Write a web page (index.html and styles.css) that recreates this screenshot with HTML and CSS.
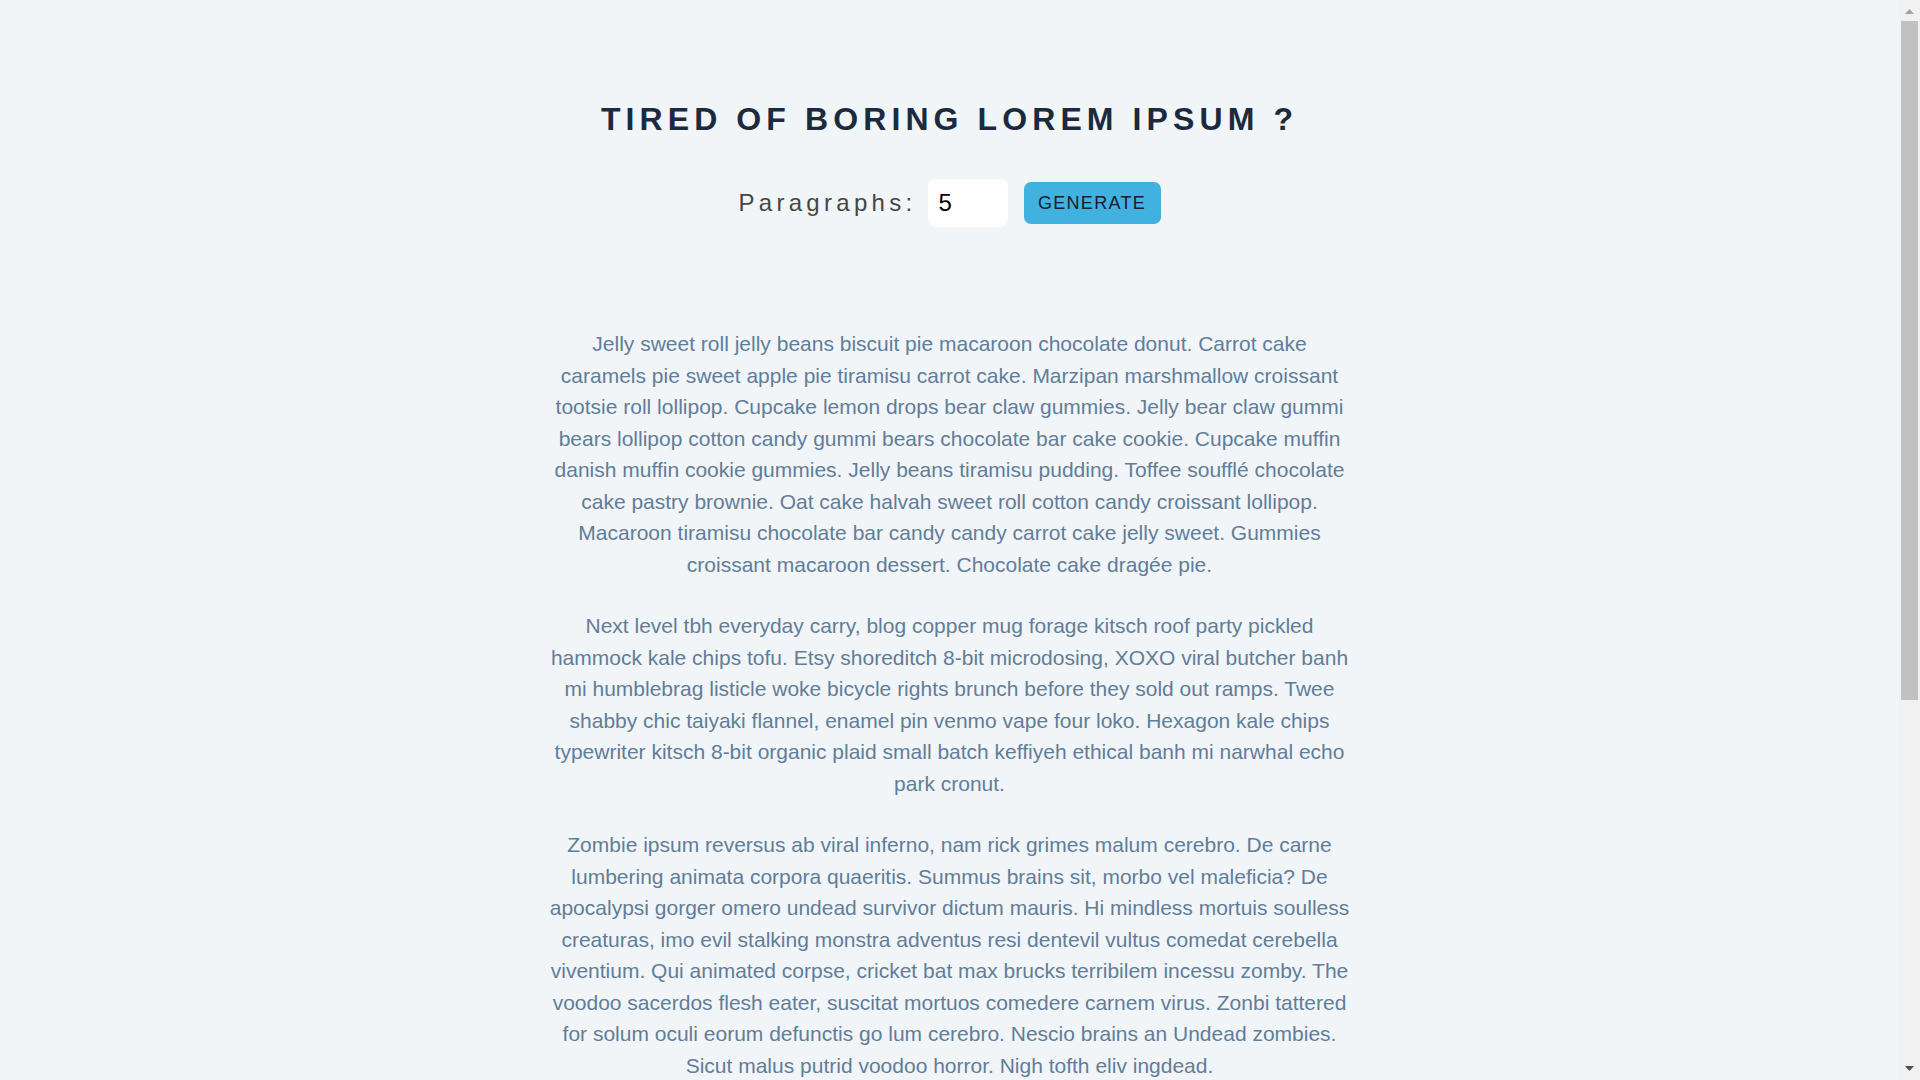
FILE: index.html
```html
<!DOCTYPE html>
<html lang="en">
<head>
<meta charset="utf-8">
<title>Lorem Ipsum Generator</title>
<link rel="stylesheet" href="styles.css">
</head>
<body>
<div class="viewport">
  <main class="page">
    <section class="section-center">
      <h3 class="title">tired of boring lorem ipsum ?</h3>
      <form class="lorem-form">
        <label class="form-label" for="amount">Paragraphs:</label>
        <input class="form-input" type="number" name="amount" id="amount" value="5">
        <button class="btn" type="submit">generate</button>
      </form>
      <article class="lorem-text">
        <p>Jelly sweet roll jelly beans biscuit pie macaroon chocolate donut. Carrot cake caramels pie sweet apple pie tiramisu carrot cake. Marzipan marshmallow croissant tootsie roll lollipop. Cupcake lemon drops bear claw gummies. Jelly bear claw gummi bears lollipop cotton candy gummi bears chocolate bar cake cookie. Cupcake muffin danish muffin cookie gummies. Jelly beans tiramisu pudding. Toffee soufflé chocolate cake pastry brownie. Oat cake halvah sweet roll cotton candy croissant lollipop. Macaroon tiramisu chocolate bar candy candy carrot cake jelly sweet. Gummies croissant macaroon dessert. Chocolate cake dragée pie.</p>
        <p>Next level tbh everyday carry, blog copper mug forage kitsch roof party pickled hammock kale chips tofu. Etsy shoreditch 8-bit microdosing, XOXO viral butcher banh mi humblebrag listicle woke bicycle rights brunch before they sold out ramps. Twee shabby chic taiyaki flannel, enamel pin venmo vape four loko. Hexagon kale chips typewriter kitsch 8-bit organic plaid small batch keffiyeh ethical banh mi narwhal echo park cronut.</p>
        <p>Zombie ipsum reversus ab viral inferno, nam rick grimes malum cerebro. De carne lumbering animata corpora quaeritis. Summus brains sit, morbo vel maleficia? De apocalypsi gorger omero undead survivor dictum mauris. Hi mindless mortuis soulless creaturas, imo evil stalking monstra adventus resi dentevil vultus comedat cerebella viventium. Qui animated corpse, cricket bat max brucks terribilem incessu zomby. The voodoo sacerdos flesh eater, suscitat mortuos comedere carnem virus. Zonbi tattered for solum oculi eorum defunctis go lum cerebro. Nescio brains an Undead zombies. Sicut malus putrid voodoo horror. Nigh tofth eliv ingdead.</p>
        <p>Cat ipsum dolor sit amet, purr when being pet. Furrier and even more furrier hairball. Spit up on light gray carpet instead of adjacent linoleum sit and stare if it fits i sits. Flex claws on the human's belly and purr like a lawnmower. Chill on the couch table. Knock over christmas tree flop over. Check cat door for ambush 10 times before coming in lounge in doorway hide when guests come over, for dead stare with ears cocked.</p>
        <p>Bacon ipsum dolor amet pastrami shank tenderloin, ham hock frankfurter ribeye chuck spare ribs pork belly. Kielbasa short loin bresaola, turducken jowl meatball tri-tip burgdoggen. Pork chop andouille prosciutto, picanha biltong doner strip steak beef ribs. Ground round swine fatback leberkas cupim, salami shoulder brisket pancetta meatloaf boudin. Sirloin venison jerky capicola, alcatra porchetta short ribs tongue hamburger. Filet mignon pig drumstick flank corned beef, chislic kevin rump landjaeger t-bone. Beef ribs buffalo cow turkey ball tip sausage, shankle bacon pork loin strip steak.</p>
      </article>
    </section>
  </main>
  <div class="scrollbar" aria-hidden="true">
    <div class="sb-btn">
      <svg class="sb-arrow" width="9" height="5" viewBox="0 0 9 5"><path d="M4.5 0 L9 5 L0 5 Z" fill="#a3a3a3"/></svg>
    </div>
    <div class="sb-track">
      <div class="sb-thumb"></div>
    </div>
    <div class="sb-btn sb-btn-down">
      <svg class="sb-arrow" width="9" height="5" viewBox="0 0 9 5"><path d="M0 0 L9 0 L4.5 5 Z" fill="#505050"/></svg>
    </div>
  </div>
</div>
</body>
</html>
```
FILE: styles.css
```css
* {
  box-sizing: border-box;
}

html, body {
  margin: 0;
  padding: 0;
}

body {
  background: #f1f5f8;
  font-family: "Liberation Sans", Arial, sans-serif;
  color: #102a42;
}

.viewport {
  display: flex;
  align-items: flex-start;
}

.page {
  flex: 1;
  min-width: 0;
}

/* browser scrollbar look-alike */
.scrollbar {
  position: sticky;
  top: 0;
  flex: 0 0 21px;
  width: 21px;
  height: 100vh;
  background: #f1f1f1;
  display: flex;
  flex-direction: column;
}

.sb-btn {
  height: 21px;
  display: flex;
  justify-content: center;
  padding-top: 9px;
}

.sb-btn-down {
  padding-top: 7px;
}

.sb-arrow {
  display: block;
}

.sb-track {
  flex: 1;
  padding: 0 2px;
}

.sb-thumb {
  height: 679px;
  background: #c1c1c1;
}

.section-center {
  padding: 99px 0 60px;
  display: flex;
  flex-direction: column;
  align-items: center;
}

.title {
  margin: 0;
  font-size: 32px;
  line-height: 40px;
  font-weight: 700;
  letter-spacing: 5.1px;
  text-transform: uppercase;
  color: #1c2a3d;
  text-align: center;
}

.lorem-form {
  margin-top: 40px;
  display: flex;
  align-items: center;
  justify-content: center;
}

.form-label {
  font-size: 24px;
  letter-spacing: 4.3px;
  color: #464646;
  margin-right: 11px;
}

.form-input {
  width: 80px;
  height: 48px;
  border: none;
  border-radius: 8px;
  background: #ffffff;
  padding: 0 11px;
  font-family: "Liberation Sans", Arial, sans-serif;
  font-size: 24px;
  color: #000;
  outline: none;
  -moz-appearance: textfield;
}

.form-input::-webkit-inner-spin-button,
.form-input::-webkit-outer-spin-button {
  -webkit-appearance: none;
  margin: 0;
}

.btn {
  margin-left: 16px;
  width: 137px;
  height: 42px;
  padding: 0;
  border: none;
  border-radius: 7px;
  background: #41b2e0;
  color: #15202b;
  font-family: "Liberation Sans", Arial, sans-serif;
  font-size: 18px;
  letter-spacing: 1.3px;
  text-transform: uppercase;
  cursor: pointer;
}

.lorem-text {
  margin-top: 101px;
  width: 803px;
}

.lorem-text p {
  margin: 0 0 30px;
  font-size: 21px;
  line-height: 31.5px;
  color: #617d98;
  text-align: center;
}
```
